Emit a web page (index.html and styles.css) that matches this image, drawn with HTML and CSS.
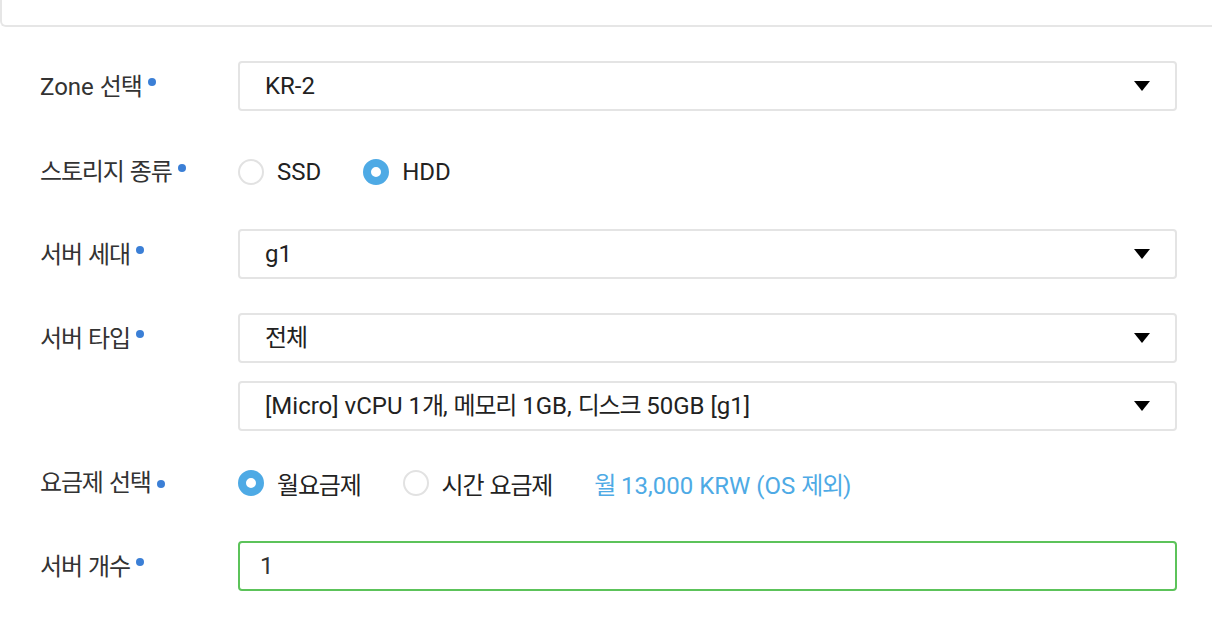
FILE: index.html
```html
<!DOCTYPE html>
<html lang="ko">
<head>
<meta charset="utf-8">
<link rel="stylesheet" href="styles.css">
</head>
<body>
<div class="card-top"></div>
<form class="form">
  <div class="row">
    <div class="label"><span>Zone <span class="ko">선택</span></span><span class="req"></span></div>
    <div class="field">
      <div class="select"><span class="value">KR-2</span><span class="caret"></span></div>
    </div>
  </div>
  <div class="row row-radio">
    <div class="label"><span class="ko">스토리지 종류</span><span class="req"></span></div>
    <div class="field radios">
      <label class="option"><span class="radio"></span><span>SSD</span></label>
      <label class="option"><span class="radio checked"></span><span>HDD</span></label>
    </div>
  </div>
  <div class="row">
    <div class="label"><span class="ko">서버 세대</span><span class="req"></span></div>
    <div class="field">
      <div class="select"><span class="value">g1</span><span class="caret"></span></div>
    </div>
  </div>
  <div class="row">
    <div class="label"><span class="ko">서버 타입</span><span class="req"></span></div>
    <div class="field stack">
      <div class="select"><span class="value ko">전체</span><span class="caret"></span></div>
      <div class="select"><span class="value">[Micro] vCPU 1<span class="ko">개</span>, <span class="ko">메모리</span> 1GB, <span class="ko">디스크</span> 50GB [g1]</span><span class="caret"></span></div>
    </div>
  </div>
  <div class="row row-radio row-compact">
    <div class="label"><span class="ko">요금제 선택</span><span class="req"></span></div>
    <div class="field radios">
      <label class="option"><span class="radio checked"></span><span class="ko">월요금제</span></label>
      <label class="option"><span class="radio"></span><span class="ko">시간 요금제</span></label>
      <span class="price"><span class="ko">월</span> 13,000 KRW (OS <span class="ko">제외</span>)</span>
    </div>
  </div>
  <div class="row">
    <div class="label"><span class="ko">서버 개수</span><span class="req"></span></div>
    <div class="field">
      <div class="input">1</div>
    </div>
  </div>
</form>
</body>
</html>
```
FILE: styles.css
```css
* { box-sizing: border-box; }
html, body { margin: 0; padding: 0; background: #fff; }
body {
  font-family: Roboto, "Noto Sans CJK KR", sans-serif;
  font-size: 24px;
  color: #222;
  overflow: hidden;
}
.ko { letter-spacing: -1.2px; word-spacing: 1.5px; }
.card-top {
  height: 27px;
  border-left: 2px solid #e6e6e6;
  border-bottom: 2px solid #e6e6e6;
  border-bottom-left-radius: 6px;
}
.form {
  padding: 34px 35px 0 40px;
  display: flex;
  flex-direction: column;
}
.row {
  display: flex;
  align-items: flex-start;
}
.row + .row { margin-top: 34px; }
.label {
  width: 198px;
  flex: none;
  height: 50px;
  display: flex;
  align-items: center;
  color: #333;
  line-height: 24px;
  white-space: nowrap;
  padding-top: 2px;
}
.req {
  display: inline-block;
  width: 8px;
  height: 8px;
  border-radius: 50%;
  background: #3b7fd6;
  align-self: flex-start;
  margin: 15px 0 0 6px;
}
.field { flex: 1; min-width: 0; }
.stack { display: flex; flex-direction: column; gap: 18px; }
.select, .input {
  height: 50px;
  border: 2px solid #e4e4e4;
  border-radius: 4px;
  display: flex;
  align-items: center;
  padding: 0 25px 0 25px;
  line-height: 24px;
  color: #222;
}
.select .value { flex: 1; white-space: nowrap; }
.caret {
  width: 0;
  height: 0;
  border-left: 8px solid transparent;
  border-right: 8px solid transparent;
  border-top: 10px solid #000;
}
.input {
  border-color: #5cc35a;
  padding-left: 20px;
  color: #333;
}
.row-radio .label, .row-radio .field { height: 50px; padding-top: 4px; }
.row-compact .label, .row-compact .field { height: 42px; padding-top: 0; padding-bottom: 6px; }
.radios {
  display: flex;
  align-items: center;
  gap: 42px;
}
.option {
  display: flex;
  align-items: center;
  gap: 13px;
  color: #222;
  white-space: nowrap;
}
.radio {
  width: 26px;
  height: 26px;
  border-radius: 50%;
  border: 2px solid #e2e2e2;
  background: #fff;
}
.radio.checked {
  border: 8px solid #4eaae5;
}
.price { color: #4eaae5; white-space: nowrap; }
```
